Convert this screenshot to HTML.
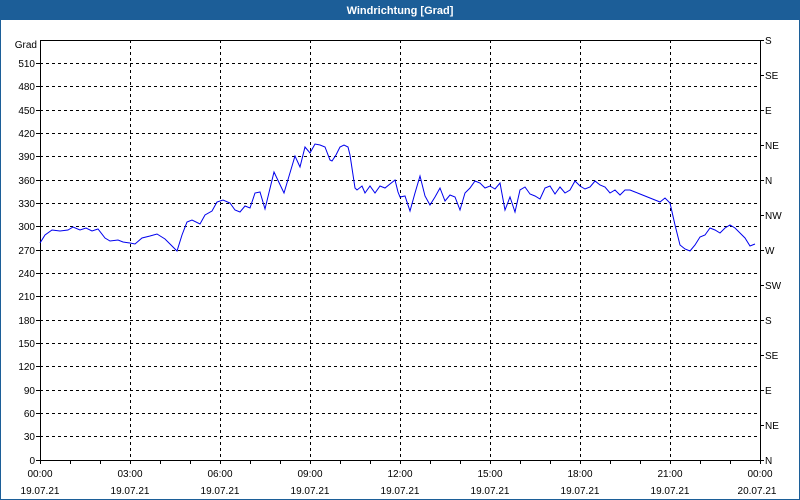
<!DOCTYPE html><html><head><style>
body{margin:0;width:800px;height:500px;overflow:hidden;background:#fff;font-family:"Liberation Sans",sans-serif}
</style></head><body>
<svg width="800" height="500" xmlns="http://www.w3.org/2000/svg" style="display:block">
<rect x="0" y="0" width="800" height="500" fill="#fff"/>
<rect x="0.5" y="0.5" width="799" height="499" fill="none" stroke="#1c5e98"/>
<rect x="0" y="0" width="800" height="20" fill="#1c5e98"/>
<text x="400" y="14" fill="#fff" font-size="11" font-weight="bold" text-anchor="middle">Windrichtung [Grad]</text>
<g stroke="#000" stroke-dasharray="3,3" stroke-width="1">
<path d="M40 63.5H760M40 86.5H760M40 110.5H760M40 133.5H760M40 156.5H760M40 180.5H760M40 203.5H760M40 226.5H760M40 250.5H760M40 273.5H760M40 296.5H760M40 320.5H760M40 343.5H760M40 366.5H760M40 390.5H760M40 413.5H760M40 436.5H760"/>
<path d="M130.5 40V460M220.5 40V460M310.5 40V460M400.5 40V460M490.5 40V460M580.5 40V460M670.5 40V460"/>
</g>
<rect x="40.5" y="40.5" width="720" height="420" fill="none" stroke="#000"/>
<g stroke="#000"><path d="M70.5 460V464M100.5 460V464M160.5 460V464M190.5 460V464M250.5 460V464M280.5 460V464M340.5 460V464M370.5 460V464M430.5 460V464M460.5 460V464M520.5 460V464M550.5 460V464M610.5 460V464M640.5 460V464M700.5 460V464M730.5 460V464M40.5 460V464M130.5 460V464M220.5 460V464M310.5 460V464M400.5 460V464M490.5 460V464M580.5 460V464M670.5 460V464M760.5 460V464"/>
<path d="M760 40.5H764M760 75.5H764M760 110.5H764M760 145.5H764M760 180.5H764M760 215.5H764M760 250.5H764M760 285.5H764M760 320.5H764M760 355.5H764M760 390.5H764M760 425.5H764M760 460.5H764M36 63.5H40M36 86.5H40M36 110.5H40M36 133.5H40M36 156.5H40M36 180.5H40M36 203.5H40M36 226.5H40M36 250.5H40M36 273.5H40M36 296.5H40M36 320.5H40M36 343.5H40M36 366.5H40M36 390.5H40M36 413.5H40M36 436.5H40M36 460.5H40"/></g>
<g font-size="10" fill="#000" text-anchor="end">
<text x="37" y="48">Grad</text>
<text x="35" y="67">510</text><text x="35" y="90">480</text><text x="35" y="114">450</text><text x="35" y="137">420</text><text x="35" y="160">390</text><text x="35" y="184">360</text><text x="35" y="207">330</text><text x="35" y="230">300</text><text x="35" y="254">270</text><text x="35" y="277">240</text><text x="35" y="300">210</text><text x="35" y="324">180</text><text x="35" y="347">150</text><text x="35" y="370">120</text><text x="35" y="394">90</text><text x="35" y="417">60</text><text x="35" y="440">30</text><text x="35" y="464">0</text>
</g>
<g font-size="10" fill="#000">
<text x="765" y="44">S</text><text x="765" y="79">SE</text><text x="765" y="114">E</text><text x="765" y="149">NE</text><text x="765" y="184">N</text><text x="765" y="219">NW</text><text x="765" y="254">W</text><text x="765" y="289">SW</text><text x="765" y="324">S</text><text x="765" y="359">SE</text><text x="765" y="394">E</text><text x="765" y="429">NE</text><text x="765" y="464">N</text>
</g>
<g font-size="10" fill="#000" text-anchor="middle">
<text x="40" y="477">00:00</text><text x="130" y="477">03:00</text><text x="220" y="477">06:00</text><text x="310" y="477">09:00</text><text x="400" y="477">12:00</text><text x="490" y="477">15:00</text><text x="580" y="477">18:00</text><text x="670" y="477">21:00</text><text x="760" y="477">00:00</text>
<text x="40" y="494">19.07.21</text><text x="130" y="494">19.07.21</text><text x="220" y="494">19.07.21</text><text x="310" y="494">19.07.21</text><text x="400" y="494">19.07.21</text><text x="490" y="494">19.07.21</text><text x="580" y="494">19.07.21</text><text x="670" y="494">19.07.21</text><text x="757" y="494">20.07.21</text>
</g>
<polyline fill="none" stroke="#0000ee" stroke-width="1" points="40,243 45,235 52,230 60,231 68,230 73,227 80,230 86,228 92,231 98,229 105,238 110,241 118,240 123,242 130,243 135,244 142,238 150,236 157,234 165,239 172,246 177,251 182,235 187,222 192,220 200,224 205,215 212,211 217,202 223,200 230,203 235,210 240,212 245,206 250,208 255,193 260,192 265,209 274,172 284,193 295,156 300,167 305,147 310,153 315,144 320,145 325,147 330,160 332,161 336,155 340,147 344,145 348,147 350,155 355,188 357,190 362,186 365,193 370,186 375,193 380,186 385,188 390,184 395,180 398,192 400,197 405,196 410,211 415,193 420,176 425,196 430,205 435,197 440,188 445,201 450,195 455,197 460,210 465,193 470,188 475,181 480,183 485,188 490,186 495,189 500,183 505,210 510,197 515,212 520,190 525,187 530,194 535,196 540,199 545,188 550,186 555,194 560,187 565,193 570,190 575,181 580,186 585,189 590,187 595,181 600,185 605,187 610,193 615,190 620,195 625,190 630,190 635,192 640,194 645,196 650,198 655,200 660,202 665,198 670,203 675,225 680,245 685,249 690,251 695,245 700,237 705,235 710,228 715,230 720,233 725,228 730,225 735,228 740,233 745,238 750,246 755,244"/>
</svg>
</body></html>
